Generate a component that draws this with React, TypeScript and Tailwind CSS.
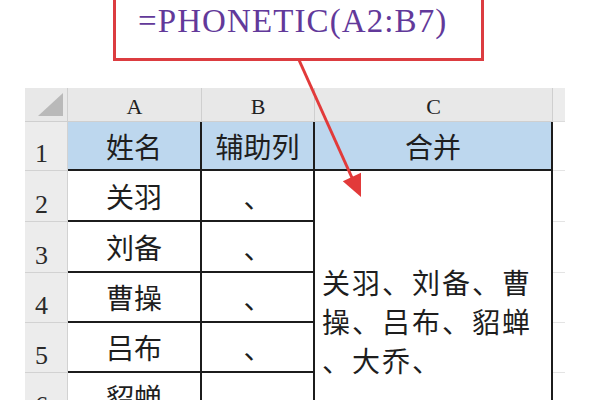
const formula = "=PHONETIC(A2:B7)";

const rows = [
  { n: "2", name: "关羽" },
  { n: "3", name: "刘备" },
  { n: "4", name: "曹操" },
  { n: "5", name: "吕布" },
  { n: "6", name: "貂蝉" },
  { n: "7", name: "大乔" },
];

const cjk = "font-['Noto_Sans_CJK_SC','Noto_Sans',sans-serif]";
const serif = "font-['Liberation_Serif',serif]";

const ColHead = ({ label }: { label: string }) => (
  <div
    className={`flex items-center justify-center pt-[5px] bg-[#e8e8e8] border-r border-b border-[#cfcfcf] text-[22px] leading-none text-[#222] ${serif}`}
  >
    {label}
  </div>
);

const RowHead = ({ label }: { label: string }) => (
  <div
    className={`flex items-end pl-[10px] pb-[3px] bg-[#ececec] border-r border-b border-[#d2d2d2] text-[26px] leading-none text-[#2a2a2a] ${serif}`}
  >
    {label}
  </div>
);

const Cell = ({ text, blue }: { text: string; blue?: boolean }) => (
  <div
    className={`flex items-center justify-center border-r-2 border-b-2 border-[#1c1c1c] text-[28px] leading-none text-[#1e1e1e] ${cjk} ${
      blue ? "bg-[#bdd7ee]" : "bg-white"
    }`}
  >
    {text}
  </div>
);

const Spare = ({ head }: { head?: boolean }) => (
  <div
    className={
      head
        ? "bg-[#ececec] border-b border-[#dcdcdc]"
        : "bg-white border-b border-[#e4e4e4]"
    }
  />
);

export default function App() {
  return (
    <div className="relative w-[600px] h-[400px] overflow-hidden bg-white">
      {/* callout with the formula */}
      <div className="flex flex-col h-[88px]">
        <div className="ml-[113px] -mt-[10px] w-[371px] h-[71px] shrink-0 border-[3px] border-[#dc3c40] pl-[22px] pt-[12px]">
          <div className={`whitespace-nowrap text-[33px] leading-[33px] tracking-[1.1px] text-[#62399a] ${serif}`}>
            {formula}
          </div>
        </div>
      </div>

      {/* sheet */}
      <div className="ml-[25px] grid grid-cols-[43px_134px_113px_238px_12px] grid-rows-[34px_49px_51px_51px_50px_50px_50px_50px]">
        <div className="relative bg-[#e8e8e8] border-r border-b border-[#cfcfcf]">
          <svg className="absolute left-[13px] top-[5px]" width="25" height="23" viewBox="0 0 25 23">
            <polygon points="25,0 25,23 0,23" fill="#b9b9b9" />
          </svg>
        </div>
        <ColHead label="A" />
        <ColHead label="B" />
        <ColHead label="C" />
        <Spare head />

        <RowHead label="1" />
        <Cell text="姓名" blue />
        <Cell text="辅助列" blue />
        <Cell text="合并" blue />
        <Spare />

        {rows.map((r, i) => (
          <div key={r.n} className="contents">
            <RowHead label={r.n} />
            <Cell text={r.name} />
            <Cell text="、" />
            {i === 0 && (
              <div
                className={`row-span-6 flex flex-col justify-center pl-[7px] border-r-2 border-b-2 border-[#1c1c1c] bg-white text-[28px] leading-[39px] tracking-[2px] whitespace-nowrap text-[#1e1e1e] ${cjk}`}
              >
                <div>关羽、刘备、曹</div>
                <div>操、吕布、貂蝉</div>
                <div>、大乔、</div>
              </div>
            )}
            <Spare />
          </div>
        ))}
      </div>

      {/* red arrow */}
      <svg className="absolute left-0 top-0 pointer-events-none" width="600" height="400" viewBox="0 0 600 400">
        <line x1="299" y1="60" x2="353" y2="180" stroke="#e23a3a" strokeWidth="3" />
        <polygon points="361,197 342.8,181.2 361,172.8" fill="#e23a3a" />
      </svg>
    </div>
  );
}
